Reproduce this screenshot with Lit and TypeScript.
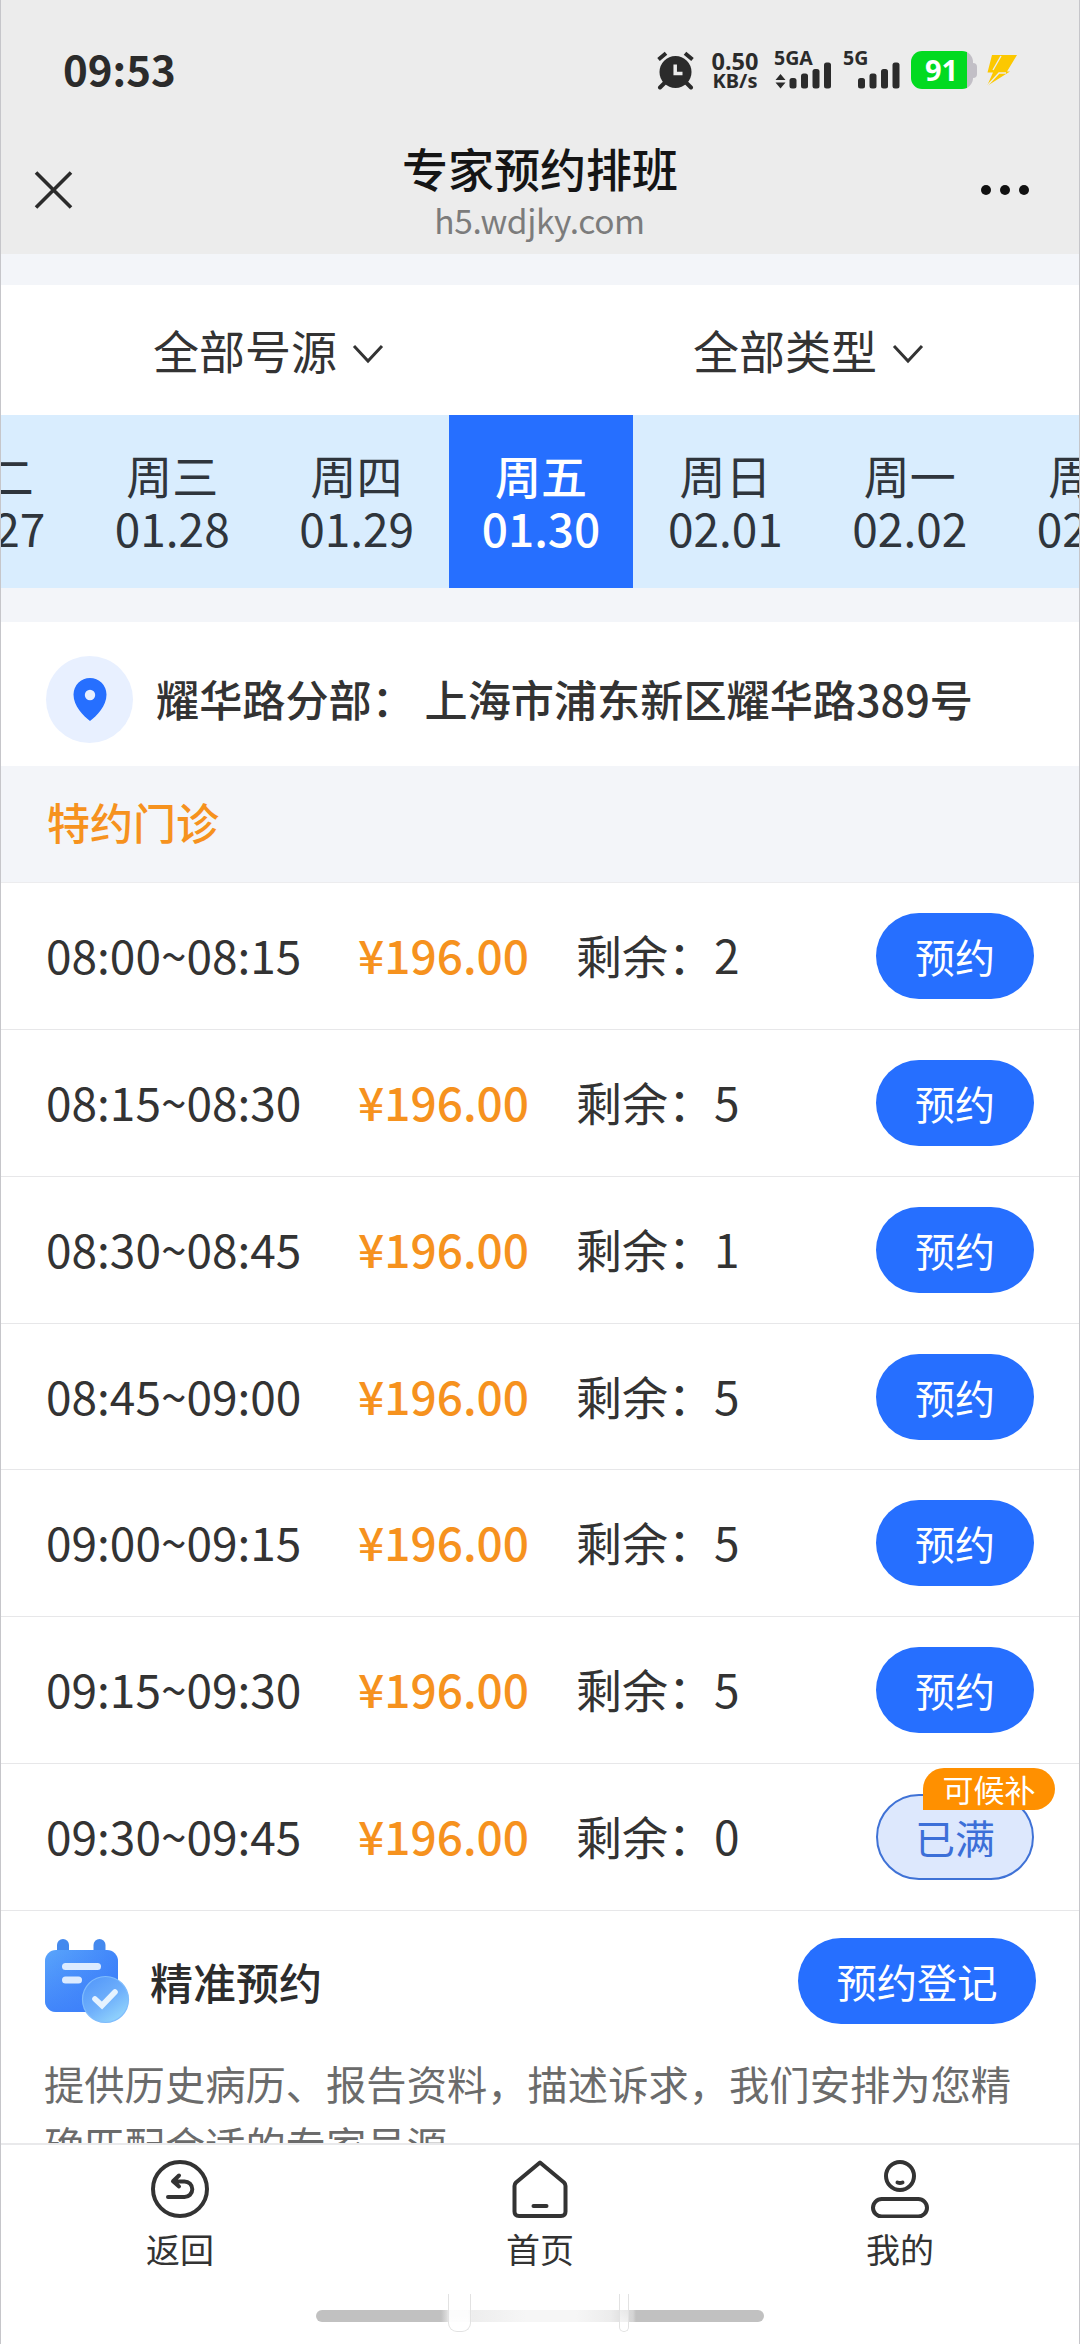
import { LitElement, html, css, svg } from "lit";
import { customElement, property } from "lit/decorators.js";
import { classMap } from "lit/directives/class-map.js";

interface Day { week: string; date: string; active?: boolean }
interface Slot { time: string; price: string; left: number }

const DAYS: Day[] = [
  { week: "周二", date: "01.27" },
  { week: "周三", date: "01.28" },
  { week: "周四", date: "01.29" },
  { week: "周五", date: "01.30", active: true },
  { week: "周日", date: "02.01" },
  { week: "周一", date: "02.02" },
  { week: "周二", date: "02.03" },
];

const SLOTS: Slot[] = [
  { time: "08:00~08:15", price: "196.00", left: 2 },
  { time: "08:15~08:30", price: "196.00", left: 5 },
  { time: "08:30~08:45", price: "196.00", left: 1 },
  { time: "08:45~09:00", price: "196.00", left: 5 },
  { time: "09:00~09:15", price: "196.00", left: 5 },
  { time: "09:15~09:30", price: "196.00", left: 5 },
  { time: "09:30~09:45", price: "196.00", left: 0 },
];

const signal = svg`
  <rect x="0" y="16" width="7" height="10.5" rx="2.5"/>
  <rect x="11.5" y="11.5" width="7" height="15" rx="2.5"/>
  <rect x="23" y="7" width="7" height="19.5" rx="2.5"/>
  <rect x="34.5" y="0.5" width="7" height="26" rx="2.5"/>`;

@customElement("status-bar")
export class StatusBar extends LitElement {
  static styles = css`
    :host { display: flex; align-items: flex-start; height: 142px; color: #2b2b2b; }
    .time { margin: 43px 0 0 63px; font: 700 42px/50px "Noto Sans CJK SC", sans-serif; }
    .icons { display: flex; align-items: flex-start; margin: 51px 62px 0 auto; }
    .icons svg { display: block; }
    .speed { width: 50px; margin-left: 16px; text-align: center; font-weight: 700; font-family: "Noto Sans", sans-serif; white-space: nowrap; }
    .num { font-size: 23.500px; line-height: 20px; }
    .unit { font-size: 20px; line-height: 20px; }
    .net { width: 57px; margin-left: 14px; font: 700 19.500px/13px "Noto Sans", sans-serif; }
    .net svg { margin-top: -2px; }
    .net.second { width: 58px; margin-left: 12px; }
    .battery { display: flex; align-items: center; margin-left: 10px; }
    .cell { width: 62px; height: 38px; border-radius: 11px; box-sizing: border-box;
      background: linear-gradient(90deg, #02da20 0 56px, #c2bfc6 56px);
      color: #fff; text-align: center; padding-right: 1px; font: 700 29px/38px "Noto Sans", sans-serif; }
    .nub { width: 4px; height: 15px; background: #c2bfc6; border-radius: 0 5px 5px 0; }
    .bolt { margin: 4px 0 0 9px; }
  `;
  render() {
    return html`
      <div class="time">09:53</div>
      <div class="icons">
        <svg width="37" height="39" viewBox="0 0 37 39">
          <g fill="none" stroke="#2b2b2b" stroke-width="4" stroke-linecap="butt">
            <path d="M1.5 8.5 9 2.3M35.500 8.500 28 2.300"/>
            <path d="M7.500 32 3 36.500M29.500 32 34 36.500" stroke-linecap="round"/>
          </g>
          <circle cx="18.500" cy="21" r="16" fill="#2b2b2b"/>
          <path d="M18.200 13.500V22.500H25.500" fill="none" stroke="#ececec" stroke-width="3.500"/>
        </svg>
        <div class="speed"><div class="num">0.50</div><div class="unit">KB/s</div></div>
        <div class="net">5GA
          <svg width="57" height="27" viewBox="0 0 57 27" fill="#2b2b2b">
            <path d="M6.500 12 11.500 18H1.500ZM6.500 26.500 11.500 20.500H1.500Z"/>
            <g transform="translate(15.500 0)">${signal}</g>
          </svg>
        </div>
        <div class="net second">5G
          <svg width="58" height="27" viewBox="0 0 58 27" fill="#2b2b2b">
            <g transform="translate(15 0)">${signal}</g>
          </svg>
        </div>
        <div class="battery"><div class="cell">91</div><div class="nub"></div></div>
        <svg class="bolt" width="32" height="31" viewBox="0 0 32 31">
          <path d="M6 0H31L21 16.500H24L1 31 7 17.500H1.500Z" fill="#fcc800"/>
          <path d="M15 1 7 15M1 31 13 18H20" stroke="#ececec" stroke-width="1.400" fill="none"/>
        </svg>
      </div>`;
  }
}

@customElement("nav-header")
export class NavHeader extends LitElement {
  static styles = css`
    :host { display: grid; grid-template-columns: 160px 1fr 160px; height: 112px; }
    .close { margin: 29px 0 0 34px; }
    .mid { text-align: center; }
    .title { font-size: 46px; font-weight: 500; line-height: 50px; color: #151515; }
    .url { font-size: 33.500px; letter-spacing: -0.400px; line-height: 44px; margin-top: 6px; margin-right: 1px; color: #7c7c7c; }
    .more { display: flex; gap: 9px; justify-content: flex-end; margin: 42.500px 51px 0 0; }
    .dot { width: 10px; height: 10px; border-radius: 50%; background: #111; }
  `;
  render() {
    return html`
      <svg class="close" width="40" height="38" viewBox="0 0 40 38">
        <path d="M2 1.500 37 36.500M37 1.500 2 36.500" stroke="#2b2b2b" stroke-width="3.600"/>
      </svg>
      <div class="mid">
        <div class="title">专家预约排班</div>
        <div class="url">h5.wdjky.com</div>
      </div>
      <div class="more"><i class="dot"></i><i class="dot"></i><i class="dot"></i></div>`;
  }
}

@customElement("slot-row")
export class SlotRow extends LitElement {
  @property({ attribute: false }) slotData!: Slot;
  static styles = css`
    :host { display: grid; grid-template-columns: 312px 218px 1fr auto; align-items: center;
      height: 146.860px; box-sizing: border-box; padding: 0 46px; border-bottom: 1px solid #e7e7e9;
      font-size: 46px; color: #333; white-space: nowrap; background: #fff; }
    .cell { padding-bottom: 4px; }
    .price { color: #f6921e; font-weight: 500; }
    .btn { position: relative; width: 158px; height: 86px; box-sizing: border-box; border-radius: 43px;
      background: #266fff; color: #fff; font-size: 40px; line-height: 86px; text-align: center; }
    .full { background: #dde8fd; color: #3c6fd8; border: 2px solid #3f72d6; line-height: 82px; }
    .badge { position: absolute; right: -23px; top: -28px; width: 132px; height: 42px;
      border-radius: 21px 21px 21px 0; background: #ff9000; color: #fff; font-size: 31px; line-height: 42px; }
  `;
  render() {
    const s = this.slotData;
    const full = s.left === 0;
    return html`
      <div class="cell">${s.time}</div>
      <div class="cell price">¥${s.price}</div>
      <div class="cell">剩余：${s.left}</div>
      <div class=${classMap({ btn: true, full })}>
        ${full ? "已满" : "预约"}${full ? html`<span class="badge">可候补</span>` : null}
      </div>`;
  }
}

@customElement("tab-bar")
export class TabBar extends LitElement {
  static styles = css`
    :host { display: block; height: 201px; box-sizing: border-box; border-top: 2px solid #e9e9eb; background: #fff; }
    .tabs { display: grid; grid-template-columns: repeat(3, 1fr); height: 165px; }
    .tab { display: flex; flex-direction: column; align-items: center; padding-top: 15px; font-size: 34px; line-height: 50px; color: #333; }
    .tab svg { margin-bottom: 6px; }
    .pill { position: relative; width: 448px; height: 12px; margin: 0 auto; border-radius: 6px;
      background: linear-gradient(90deg, #c1c1c1 0 125px, #dcdcdc 131px, #fafafa 134px 152px, #ededed 156px, #f6f6f6 210px 260px, #ececec 295px, #d4d4d4 317px, #c1c1c1 320px); }
    .ghost { position: absolute; top: -16px; height: 38px; box-sizing: border-box; border: 1px solid #e2e2e2;
      border-top: 0; border-radius: 0 0 9px 9px; background: linear-gradient(180deg, #fff0, #fffc); }
    .left { left: 132px; width: 23px; }
    .right { left: 303px; width: 10px; }
  `;
  render() {
    const g = (body: unknown) => html`<svg width="58" height="58" viewBox="0 0 58 58" fill="none"
      stroke="#333" stroke-width="4" stroke-linecap="round" stroke-linejoin="round">${body}</svg>`;
    return html`
      <div class="tabs">
        <div class="tab">${g(svg`<circle cx="29" cy="29" r="27"/>
          <path d="M17 37H33.500a7.800 7.800 0 0 0 0-15.600H23M28 15.500 22 21.300 28 26.500" />`)}<span>返回</span></div>
        <div class="tab">${g(svg`<path d="M29 2.500 53 22.500Q54.500 24 54.500 26V51.500Q54.500 56 50 56H8Q3.500 56 3.500 51.500V26Q3.500 24 5 22.500Z"/>
          <path d="M22.500 46H35.500"/>`)}<span>首页</span></div>
        <div class="tab">${g(svg`<circle cx="29" cy="16" r="14"/><path d="M26.500 22.500Q29 23.500 31.500 22.500"/>
          <rect x="2" y="39" width="54" height="17.500" rx="8.750"/>`)}<span>我的</span></div>
      </div>
      <div class="pill"><i class="ghost left"></i><i class="ghost right"></i></div>`;
  }
}

@customElement("app-root")
export class AppRoot extends LitElement {
  static styles = css`
    :host { display: flex; flex-direction: column; width: 1080px; height: 2344px; box-sizing: border-box;
      overflow: hidden; position: relative; background: #f3f5f9; color: #333;
      font-family: "Noto Sans CJK SC", "Noto Sans", sans-serif; }
    :host::after { content: ""; position: absolute; inset: 0; border: solid #c6c6ca; border-width: 0 1px; }
    .top { background: #ececec; height: 254px; flex: none; }
    .filters { display: grid; grid-template-columns: 1fr 1fr; flex: none; height: 130px; margin-top: 31px; background: #fff; }
    .filter { display: flex; align-items: center; justify-content: center; font-size: 46px; padding-right: 3px; }
    .filter span { margin-top: -3px; }
    .filter svg { margin: 8px 0 0 15px; }
    .days { display: flex; flex: none; justify-content: center; height: 173px; padding-left: 2px; background: #d9edfe; overflow: hidden; }
    .day { flex: none; width: 184.400px; text-align: center; font-size: 46px; line-height: 53px; padding-top: 33px; box-sizing: border-box; color: #2f353c; }
    .day.active { background: #266fff; color: #fff; font-weight: 500; }
    .place { display: flex; flex: none; height: 144.500px; box-sizing: border-box; margin-top: 33.500px; padding: 34px 46px 0; background: #fff; }
    .pin { display: flex; align-items: center; justify-content: center; width: 87px; height: 87px; border-radius: 50%; background: #e8f0ff; }
    .addr { margin-left: 23px; font-size: 43.150px; font-weight: 500; line-height: 84px; white-space: pre; }
    .section { flex: none; height: 117px; box-sizing: border-box; padding-left: 47px; font-size: 43px; line-height: 111px; font-weight: 500; color: #f6921e; border-bottom: 1px solid #ececee; }
    .slots { flex: none; }
    .precise { flex: 1; min-height: 0; overflow: hidden; background: #fff; padding: 27px 44px 0; }
    .head { display: flex; align-items: center; height: 86px; }
    .name { margin-left: 20px; font-size: 43px; font-weight: 500; line-height: 60px; color: #2c2c2c; }
    .reg { width: 238px; height: 86px; margin-left: auto; border-radius: 43px; background: #266fff; color: #fff; font-size: 40.300px; line-height: 85px; text-align: center; }
    .desc { margin: 29px 0 0; font-size: 40.300px; line-height: 60.500px; color: #6b6b6b; }
    tab-bar { flex: none; }
  `;
  render() {
    const arrow = html`<svg width="32" height="20" viewBox="0 0 32 20" fill="none" stroke="#333" stroke-width="3">
      <path d="M2 2 16 17 30 2"/></svg>`;
    return html`
      <div class="top"><status-bar></status-bar><nav-header></nav-header></div>
      <div class="filters">
        <div class="filter"><span>全部号源</span>${arrow}</div>
        <div class="filter"><span>全部类型</span>${arrow}</div>
      </div>
      <div class="days">
        ${DAYS.map((d) => html`<div class=${classMap({ day: true, active: !!d.active })}>
          <div>${d.week}</div><div>${d.date}</div></div>`)}
      </div>
      <div class="place">
        <div class="pin">
          <svg width="34" height="43" viewBox="0 0 34 43">
            <path d="M17 0A16.500 16.500 0 0 1 33.500 16.500C33.500 28 24 37.500 17 43C10 37.500 .5 28 .5 16.500A16.500 16.500 0 0 1 17 0Z" fill="#266fff"/>
            <circle cx="17" cy="17" r="5.200" fill="#e8f0ff"/>
          </svg>
        </div>
        <div class="addr">耀华路分部： 上海市浦东新区耀华路389号</div>
      </div>
      <div class="section">特约门诊</div>
      <div class="slots">${SLOTS.map((s) => html`<slot-row .slotData=${s}></slot-row>`)}</div>
      <div class="precise">
        <div class="head">
          <svg width="86" height="86" viewBox="0 0 86 86">
            <defs>
              <linearGradient id="body" x1="0" y1="0" x2="1" y2="0.300">
                <stop offset="0" stop-color="#5aa5fb"/><stop offset="1" stop-color="#3f84fa"/>
              </linearGradient>
              <linearGradient id="shade" x1="0" y1="0" x2="0" y2="1">
                <stop offset="0" stop-color="#3f7ffa" stop-opacity="0"/><stop offset="1" stop-color="#3a7cfa" stop-opacity=".7"/>
              </linearGradient>
              <linearGradient id="disc" x1="0" y1="0" x2="0.700" y2="1">
                <stop offset="0" stop-color="#4f94fa"/><stop offset=".6" stop-color="#6fb0fb"/><stop offset="1" stop-color="#92d4fc"/>
              </linearGradient>
            </defs>
            <rect x="13" y="1" width="12" height="26" rx="6" fill="#4489ee"/>
            <rect x="49.500" y="1" width="12" height="26" rx="6" fill="#4489ee"/>
            <rect x="1" y="12" width="73" height="62" rx="11" fill="url(#body)"/>
            <rect x="1" y="12" width="73" height="62" rx="11" fill="url(#shade)"/>
            <rect x="18" y="25" width="39" height="7" rx="3.500" fill="#dcebff"/>
            <rect x="18" y="38.500" width="20" height="7" rx="3.500" fill="#dcebff"/>
            <circle cx="61.500" cy="61.500" r="23" fill="url(#disc)" stroke="#7fbcfd" stroke-width="1.200"/>
            <path d="M51 61 58 67.500 71 54" fill="none" stroke="#e6f3ff" stroke-width="5.600" stroke-linecap="round"/>
          </svg>
          <div class="name">精准预约</div>
          <div class="reg">预约登记</div>
        </div>
        <p class="desc">提供历史病历、报告资料，描述诉求，我们安排为您精确匹配合适的专家号源</p>
      </div>
      <tab-bar></tab-bar>`;
  }
}
